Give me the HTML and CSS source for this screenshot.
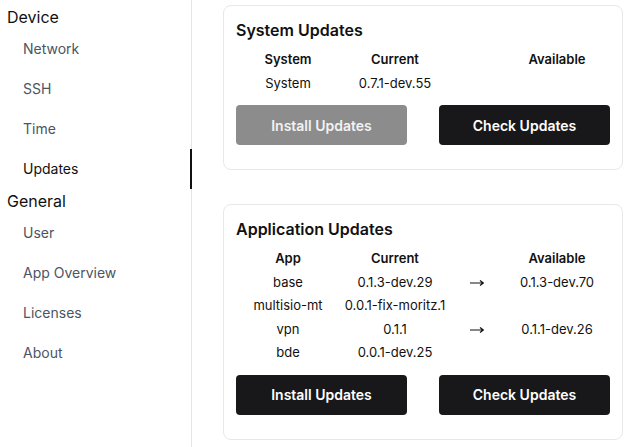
FILE: index.html
```html
<!DOCTYPE html>
<html lang="en">
<head>
    <meta charset="UTF-8">
    <meta name="viewport" content="width=device-width, initial-scale=1.0">
    <title>Settings - Updates</title>
    <link rel="stylesheet" href="styles.css">
</head>
<body>
    <div class="layout">
        <nav class="sidebar">
            <div class="nav-group">Device</div>
            <a class="nav-item" href="#">Network</a>
            <a class="nav-item" href="#">SSH</a>
            <a class="nav-item" href="#">Time</a>
            <a class="nav-item active" href="#">Updates</a>
            <div class="nav-group">General</div>
            <a class="nav-item" href="#">User</a>
            <a class="nav-item" href="#">App Overview</a>
            <a class="nav-item" href="#">Licenses</a>
            <a class="nav-item" href="#">About</a>
        </nav>

        <main class="content">
            <section class="card">
                <h2>System Updates</h2>
                <table class="update-table">
                    <colgroup>
                        <col class="col-name"><col class="col-current"><col class="col-arrow"><col class="col-available">
                    </colgroup>
                    <thead>
                        <tr><th>System</th><th>Current</th><th></th><th>Available</th></tr>
                    </thead>
                    <tbody>
                        <tr><td>System</td><td>0.7.1-dev.55</td><td></td><td></td></tr>
                    </tbody>
                </table>
                <div class="actions">
                    <button class="btn" disabled>Install Updates</button>
                    <button class="btn">Check Updates</button>
                </div>
            </section>

            <section class="card">
                <h2>Application Updates</h2>
                <table class="update-table">
                    <colgroup>
                        <col class="col-name"><col class="col-current"><col class="col-arrow"><col class="col-available">
                    </colgroup>
                    <thead>
                        <tr><th>App</th><th>Current</th><th></th><th>Available</th></tr>
                    </thead>
                    <tbody>
                        <tr>
                            <td>base</td><td>0.1.3-dev.29</td>
                            <td><svg class="arrow" viewBox="0 0 14 8" aria-label="→"><path d="M0 4H13M10 1.5L13.3 4L10 6.5"/></svg></td>
                            <td>0.1.3-dev.70</td>
                        </tr>
                        <tr><td>multisio-mt</td><td>0.0.1-fix-moritz.1</td><td></td><td></td></tr>
                        <tr>
                            <td>vpn</td><td>0.1.1</td>
                            <td><svg class="arrow" viewBox="0 0 14 8" aria-label="→"><path d="M0 4H13M10 1.5L13.3 4L10 6.5"/></svg></td>
                            <td>0.1.1-dev.26</td>
                        </tr>
                        <tr><td>bde</td><td>0.0.1-dev.25</td><td></td><td></td></tr>
                    </tbody>
                </table>
                <div class="actions">
                    <button class="btn">Install Updates</button>
                    <button class="btn">Check Updates</button>
                </div>
            </section>
        </main>
    </div>
</body>
</html>
```

FILE: styles.css
```css
body {
    margin: 0;
    font-family: Inter, "Noto Sans", sans-serif;
    color: #111;
    background: #fff;
}
.layout {
    display: flex;
    height: 447px;
    overflow: hidden;
}
.sidebar {
    width: 191px;
    flex-shrink: 0;
    border-right: 1px solid #e5e5e5;
    padding-top: 5px;
    display: flex;
    flex-direction: column;
}
.nav-group {
    font-size: 16px;
    line-height: 24px;
    padding-left: 7px;
    color: #111;
}
.nav-item {
    display: block;
    height: 40px;
    line-height: 40px;
    padding-left: 23px;
    font-size: 14px;
    color: #4b5563;
    text-decoration: none;
    margin-right: -1px;
}
.nav-item.active {
    color: #111;
    border-right: 2px solid #111;
}
.content {
    flex: 1;
    padding: 5px 8px 0 31px;
}
.card {
    border: 1px solid #e8e8e8;
    border-radius: 8px;
    padding: 12px 12px 24px;
    margin-bottom: 34px;
}
.card h2 {
    margin: 0 0 6px;
    font-size: 16px;
    line-height: 24px;
    font-weight: 600;
}
.update-table {
    width: 100%;
    table-layout: fixed;
    border-collapse: collapse;
    font-size: 13px;
}
.col-name { width: 104px; }
.col-current { width: 110px; }
.col-arrow { width: 54px; }
.col-available { width: 106px; }
.update-table th,
.update-table td {
    text-align: center;
    vertical-align: middle;
    padding: 2px 0;
    line-height: 19.5px;
    white-space: nowrap;
}
.update-table th {
    font-weight: 600;
}
.arrow {
    display: inline-block;
    width: 14px;
    height: 8px;
    vertical-align: middle;
    fill: none;
    stroke: #111;
    stroke-width: 1.2;
}
.actions {
    display: grid;
    grid-template-columns: 1fr 1fr;
    gap: 32px;
    margin-top: 10px;
}
.btn {
    height: 40px;
    border: none;
    border-radius: 4px;
    background: #18181b;
    color: #fff;
    font-family: inherit;
    font-size: 14px;
    font-weight: 600;
    cursor: pointer;
}
.btn:disabled {
    background: #8c8c8c;
    color: #f2f2f2;
    cursor: not-allowed;
}
```
